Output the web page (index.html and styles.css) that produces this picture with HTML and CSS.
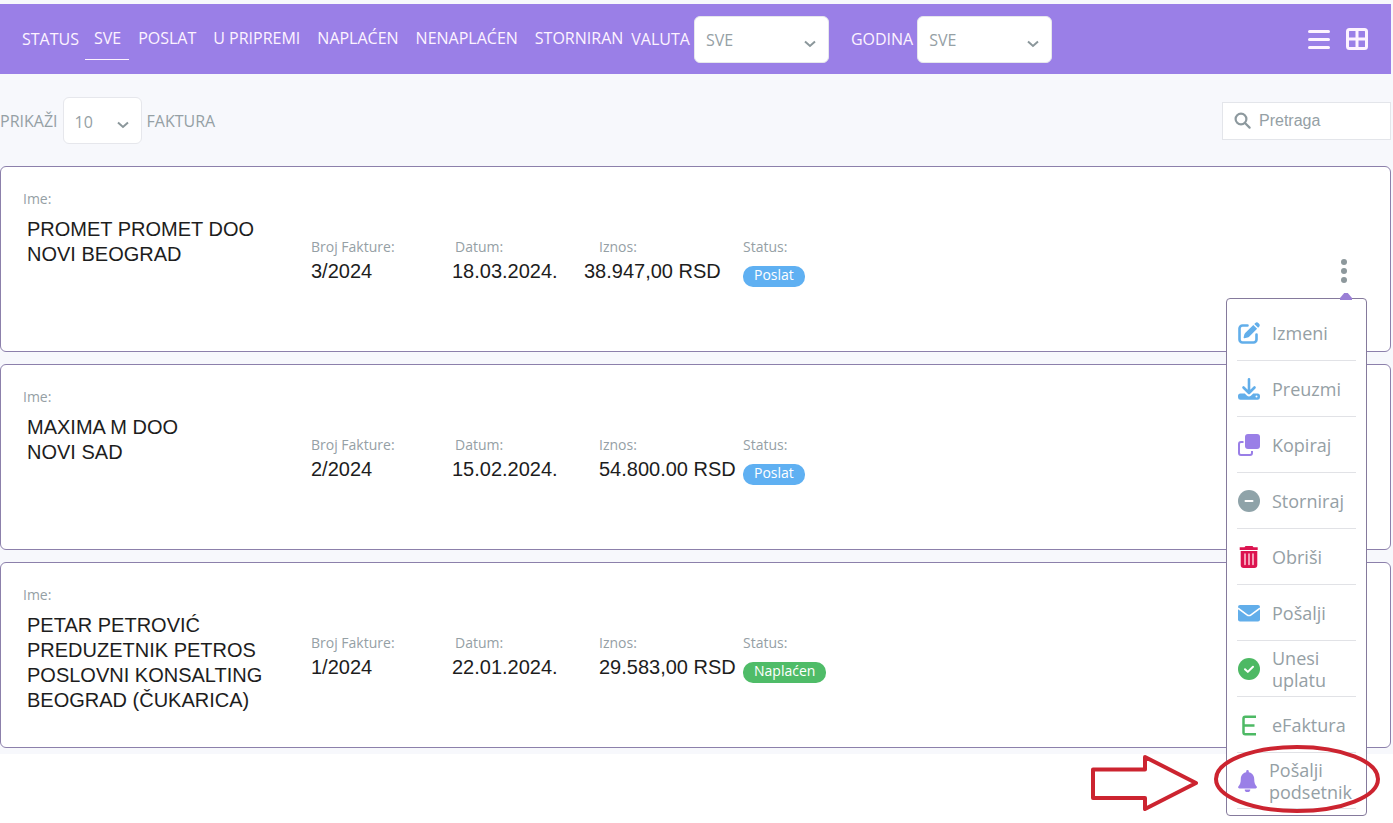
FILE: index.html
```html
<!DOCTYPE html>
<html lang="sr-Latn">
<head>
    <meta charset="UTF-8">
    <meta name="viewport" content="width=device-width, initial-scale=1.0">
    <title>Fakture</title>
    <link rel="stylesheet" href="styles.css">
</head>
<body>
    <div class="page">
        <header class="topbar">
            <span class="topbar-label">STATUS</span>
            <nav class="status-nav">
                <a href="#" class="active">SVE</a>
                <a href="#">POSLAT</a>
                <a href="#">U PRIPREMI</a>
                <a href="#">NAPLAĆEN</a>
                <a href="#">NENAPLAĆEN</a>
                <a href="#">STORNIRAN</a>
            </nav>
            <div class="filter">
                <label for="currency">VALUTA</label>
                <select id="currency" class="select">
                    <option>SVE</option>
                </select>
            </div>
            <div class="filter">
                <label for="year">GODINA</label>
                <select id="year" class="select">
                    <option>SVE</option>
                </select>
            </div>
            <div class="view-buttons">
                <button type="button" aria-label="Lista">
                    <svg width="22" height="22" viewBox="0 0 22 22" fill="none" stroke="currentColor" stroke-width="3" stroke-linecap="round">
                        <path d="M1.5 3.5h19M1.5 11.5h19M1.5 19.5h19"/>
                    </svg>
                </button>
                <button type="button" aria-label="Mreža">
                    <svg width="22" height="22" viewBox="0 0 22 22" fill="none" stroke="currentColor" stroke-width="3">
                        <rect x="1.5" y="1.5" width="19" height="19" rx="2"/>
                        <path d="M11 2v18M2 11h18"/>
                    </svg>
                </button>
            </div>
        </header>

        <div class="toolbar">
            <div class="page-size">
                <label for="pageSize">PRIKAŽI</label>
                <select id="pageSize" class="select select-small">
                    <option>10</option>
                </select>
                <span>FAKTURA</span>
            </div>
            <div class="search">
                <svg width="17" height="17" viewBox="0 0 17 17" fill="none" stroke="currentColor" stroke-width="2.2" stroke-linecap="round">
                    <circle cx="7" cy="7" r="5.4"/>
                    <path d="M11 11l4.6 4.6"/>
                </svg>
                <input type="search" placeholder="Pretraga" aria-label="Pretraga">
            </div>
        </div>

        <main class="invoices">
            <article class="invoice">
                <div class="client">
                    <span class="caption">Ime:</span>
                    <p class="client-name">PROMET PROMET DOO<br>NOVI BEOGRAD</p>
                </div>
                <div class="field">
                    <span class="caption">Broj Fakture:</span>
                    <span class="value">3/2024</span>
                </div>
                <div class="field field-date">
                    <span class="caption">Datum:</span>
                    <span class="value">18.03.2024.</span>
                </div>
                <div class="field field-wide">
                    <span class="caption">Iznos:</span>
                    <span class="value">38.947,00 RSD</span>
                </div>
                <div class="field">
                    <span class="caption">Status:</span>
                    <span class="badge badge-sent">Poslat</span>
                </div>
                <div class="actions">
                    <button type="button" class="kebab" aria-label="Opcije">
                        <svg width="8" height="26" viewBox="0 0 8 26" fill="currentColor">
                            <circle cx="4" cy="4" r="3"/>
                            <circle cx="4" cy="13" r="3"/>
                            <circle cx="4" cy="22" r="3"/>
                        </svg>
                    </button>
                    <div class="menu">
                        <button type="button" class="menu-item">
                            <svg class="blue" width="22" height="22" viewBox="0 0 22 22">
                                <path d="M9.500 3.500H4.500A3 3 0 0 0 1.500 6.500v11A3 3 0 0 0 4.500 20.500h11a3 3 0 0 0 3-3v-5" fill="none" stroke="currentColor" stroke-width="2.600" stroke-linecap="round"/>
                                <path d="M15.300 2.900l3.800 3.800-8 8c-.4.400-.9.700-1.500.8l-3.200.8c-.5.100-.9-.3-.8-.8l.8-3.200c.1-.5.400-1 .8-1.400zM16.300 1.900l1-1c.9-.9 2.200-.9 3 0l.8.800c.9.900.9 2.200 0 3l-1 1z" fill="currentColor"/>
                            </svg>
                            <span>Izmeni</span>
                        </button>
                        <button type="button" class="menu-item">
                            <svg class="blue" width="22" height="22" viewBox="0 0 22 22">
                                <path d="M11 1.300v13M5.500 9.500l5.500 5.500 5.500-5.500" fill="none" stroke="currentColor" stroke-width="2.600" stroke-linecap="round" stroke-linejoin="round"/>
                                <path d="M2.800 15.500h4l2.300 2.200c1.100 1 2.700 1 3.800 0l2.300-2.200h4A2.600 2.600 0 0 1 22 18.100v1.100a2.600 2.600 0 0 1-2.800 2.500H2.800A2.600 2.600 0 0 1 0 19.200v-1.100a2.600 2.600 0 0 1 2.800-2.600z" fill="currentColor"/>
                                <circle cx="18.500" cy="18.600" r="1" fill="#fff"/>
                            </svg>
                            <span>Preuzmi</span>
                        </button>
                        <button type="button" class="menu-item">
                            <svg class="purple" width="22" height="22" viewBox="0 0 22 22">
                                <rect x="7" y="0" width="15" height="15" rx="3" fill="currentColor"/>
                                <path d="M5.500 8H3a2 2 0 0 0-2 2v9a2 2 0 0 0 2 2h9a2 2 0 0 0 2-2v-2" fill="none" stroke="currentColor" stroke-width="2"/>
                            </svg>
                            <span>Kopiraj</span>
                        </button>
                        <button type="button" class="menu-item">
                            <svg class="slate" width="22" height="22" viewBox="0 0 22 22">
                                <circle cx="11" cy="11" r="11" fill="currentColor"/>
                                <path d="M7.500 11h7" stroke="#fff" stroke-width="2" stroke-linecap="round"/>
                            </svg>
                            <span>Storniraj</span>
                        </button>
                        <button type="button" class="menu-item">
                            <svg class="red" width="22" height="22" viewBox="0 0 22 22">
                                <path d="M7.500 0h7l1 1.200h4.200V4H1.700V1.200H6.500zM2.700 5h16.600v14a3 3 0 0 1-3 3H5.700a3 3 0 0 1-3-3z" fill="currentColor"/>
                                <path d="M7 8v10.500M11 8v10.500M15 8v10.500" stroke="#ffd9e3" stroke-width="1.400" stroke-linecap="round"/>
                            </svg>
                            <span>Obriši</span>
                        </button>
                        <button type="button" class="menu-item">
                            <svg class="blue" width="22" height="22" viewBox="0 0 22 22">
                                <rect x="0" y="3" width="22" height="16.500" rx="2" fill="currentColor"/>
                                <path d="M0 6.200l9 6.600c1.200.9 2.800.9 4 0l9-6.600" fill="none" stroke="#fff" stroke-width="1.500"/>
                            </svg>
                            <span>Pošalji</span>
                        </button>
                        <button type="button" class="menu-item">
                            <svg class="green" width="22" height="22" viewBox="0 0 22 22">
                                <circle cx="11" cy="11" r="11" fill="currentColor"/>
                                <path d="M7 11.200l2.800 2.700L15 8.700" fill="none" stroke="#fff" stroke-width="2" stroke-linecap="round" stroke-linejoin="round"/>
                            </svg>
                            <span>Unesi uplatu</span>
                        </button>
                        <button type="button" class="menu-item">
                            <svg class="green" width="22" height="22" viewBox="0 0 22 22" fill="none" stroke="currentColor" stroke-width="2.500">
                                <path d="M18 2.800H7.300a1.800 1.800 0 0 0-1.800 1.800v13.800a1.800 1.800 0 0 0 1.800 1.800H18M5.500 11.500H16.500"/>
                            </svg>
                            <span>eFaktura</span>
                        </button>
                        <button type="button" class="menu-item">
                            <svg class="purple" width="19" height="22" viewBox="0 0 19 22" fill="currentColor">
                                <path d="M8.200 1.400a1.300 1.300 0 0 1 2.600 0v.8c3.200.6 5.400 3.200 5.400 6.500 0 4 .9 5.900 2.300 7.600.8 1 .3 2.200-1 2.200h-16c-1.300 0-1.800-1.200-1-2.200 1.400-1.700 2.300-3.600 2.300-7.600 0-3.300 2.200-5.900 5.400-6.500zM6.700 19.400h5.600a2.800 2.600 0 0 1-5.600 0z"/>
                            </svg>
                            <span>Pošalji podsetnik</span>
                        </button>
                        <!-- oznaka za podsetnik -->
                        <svg class="callout" width="292" height="76" viewBox="0 0 292 76" fill="none" stroke="#cc2430" stroke-width="4">
                            <path d="M4 25.500h52V13l51 26-51 26V54H4z" stroke-linejoin="round"/>
                            <ellipse cx="208" cy="35" rx="81" ry="32"/>
                        </svg>
                    </div>
                </div>
            </article>

            <article class="invoice">
                <div class="client">
                    <span class="caption">Ime:</span>
                    <p class="client-name">MAXIMA M DOO<br>NOVI SAD</p>
                </div>
                <div class="field">
                    <span class="caption">Broj Fakture:</span>
                    <span class="value">2/2024</span>
                </div>
                <div class="field field-date">
                    <span class="caption">Datum:</span>
                    <span class="value">15.02.2024.</span>
                </div>
                <div class="field">
                    <span class="caption">Iznos:</span>
                    <span class="value">54.800.00 RSD</span>
                </div>
                <div class="field">
                    <span class="caption">Status:</span>
                    <span class="badge badge-sent">Poslat</span>
                </div>
            </article>

            <article class="invoice">
                <div class="client">
                    <span class="caption">Ime:</span>
                    <p class="client-name">PETAR PETROVIĆ<br>PREDUZETNIK PETROS<br>POSLOVNI KONSALTING<br>BEOGRAD (ČUKARICA)</p>
                </div>
                <div class="field">
                    <span class="caption">Broj Fakture:</span>
                    <span class="value">1/2024</span>
                </div>
                <div class="field field-date">
                    <span class="caption">Datum:</span>
                    <span class="value">22.01.2024.</span>
                </div>
                <div class="field">
                    <span class="caption">Iznos:</span>
                    <span class="value">29.583,00 RSD</span>
                </div>
                <div class="field">
                    <span class="caption">Status:</span>
                    <span class="badge badge-paid">Naplaćen</span>
                </div>
            </article>
        </main>
    </div>
</body>
</html>
```
FILE: styles.css
```css
* {
    box-sizing: border-box;
}
body {
    min-height: 100vh;
    margin: 0;
    background-color: #fff;
    color: #95a0a5;
    font-family: "Open Sans", "Noto Sans", sans-serif;
    font-size: 16px;
    line-height: 24px;
}
button {
    padding: 0;
    border: none;
    background: none;
    color: inherit;
    font: inherit;
    cursor: pointer;
}
svg {
    display: block;
    flex-shrink: 0;
}
.page {
    padding: 4px 2px 6px 0;
    background-color: #f7f8fc;
}

/* gornja traka */
.topbar {
    display: flex;
    align-items: center;
    height: 70px;
    padding: 0 23px 0 22px;
    background-color: #9a7fe7;
    color: #fdf3ff;
}
.topbar-label {
    margin-right: 6px;
}
.status-nav {
    display: flex;
}
.status-nav a {
    padding: 8px 8px 9px 9px;
    border-bottom: 1px solid transparent;
    color: inherit;
    text-decoration: none;
    white-space: nowrap;
}
.status-nav .active {
    border-bottom-color: #fdf3ff;
}
.filter {
    display: flex;
    align-items: center;
    gap: 4px;
    margin-right: 22px;
}
.select {
    width: 135px;
    height: 47px;
    padding: 2px 11px 0;
    border: 1px solid #e6e7ec;
    border-radius: 6px;
    appearance: none;
    background: #fff url("data:image/svg+xml,%3Csvg xmlns='http://www.w3.org/2000/svg' width='12' height='8' fill='none' stroke='%238b979b' stroke-width='2'%3E%3Cpath d='M1 1.500l5 4.500 5-4.500'/%3E%3C/svg%3E") no-repeat right 12px top 23px;
    color: #95a0a5;
    font: inherit;
}
.select-small {
    width: 79px;
}
.view-buttons {
    display: flex;
    gap: 16px;
    margin-left: auto;
}

/* broj faktura i pretraga */
.toolbar {
    display: flex;
    align-items: center;
    justify-content: space-between;
    padding: 23px 0 22px;
}
.page-size {
    display: flex;
    align-items: center;
    gap: 5px;
}
.search {
    display: flex;
    align-items: center;
    gap: 8px;
    width: 169px;
    height: 38px;
    padding: 0 11px;
    border: 1px solid #e3e5ea;
    background-color: #fff;
    color: #8d999e;
}
.search input {
    flex: 1;
    min-width: 0;
    padding: 0;
    border: none;
    outline: none;
    background: none;
    color: inherit;
    font: 16px "Liberation Sans", Arial, sans-serif;
}
.search input::placeholder {
    color: #95a0a5;
}

/* lista faktura */
.invoices {
    display: flex;
    flex-direction: column;
    gap: 12px;
}
.invoice {
    display: grid;
    grid-template-columns: 288px 144px 144px 144px 144px 1fr;
    min-height: 186px;
    padding: 22px;
    border: 1px solid #8c80ab;
    border-radius: 6px;
    background-color: #fff;
}
.caption {
    display: block;
    font-size: 14px;
    line-height: 20px;
}
.client-name {
    margin: 8px 0 0 4px;
    color: #1d1d1d;
    font: 20px/25px "Liberation Sans", Arial, sans-serif;
}
.field {
    padding-top: 48px;
}
.value {
    display: block;
    color: #1d1d1d;
    font: 20px/28px "Liberation Sans", Arial, sans-serif;
    white-space: nowrap;
}
.field-date .value {
    margin-left: -3px;
}
.field-wide .value {
    margin-left: -15px;
}
.badge {
    display: inline-block;
    margin-top: 9px;
    padding: 0 11px 3px;
    border-radius: 10px;
    color: #fff;
    font-size: 14px;
    line-height: 18px;
}
.badge-sent {
    background-color: #5fb0f2;
}
.badge-paid {
    background-color: #4fbc68;
}

/* meni sa opcijama */
.actions {
    position: relative;
    justify-self: end;
    padding-top: 69px;
}
.kebab {
    margin-right: 20px;
    color: #8d989c;
}
.menu {
    position: absolute;
    top: 109px;
    right: 1px;
    z-index: 1;
    width: 141px;
    padding: 6px 10px;
    border: 1px solid #857a9c;
    border-radius: 4px;
    background-color: #fff;
}
.menu::before {
    content: "";
    position: absolute;
    top: -6px;
    right: 14px;
    width: 12px;
    height: 7px;
    background-color: #9a7fd6;
    clip-path: polygon(35% 0, 65% 0, 100% 70%, 100% 100%, 0 100%, 0 70%);
}
.menu-item {
    display: flex;
    align-items: center;
    gap: 12px;
    width: 100%;
    height: 56px;
    padding-left: 1px;
    border-bottom: 1px solid #e1e2e6;
    font-size: 18px;
    line-height: 22px;
    text-align: left;
}
.blue {
    color: #62aeea;
}
.purple {
    color: #9a7fe7;
}
.slate {
    color: #8fa3a9;
}
.red {
    color: #dc1450;
}
.green {
    color: #4db964;
}
.callout {
    position: absolute;
    right: -15px;
    bottom: -5px;
    pointer-events: none;
}
```
